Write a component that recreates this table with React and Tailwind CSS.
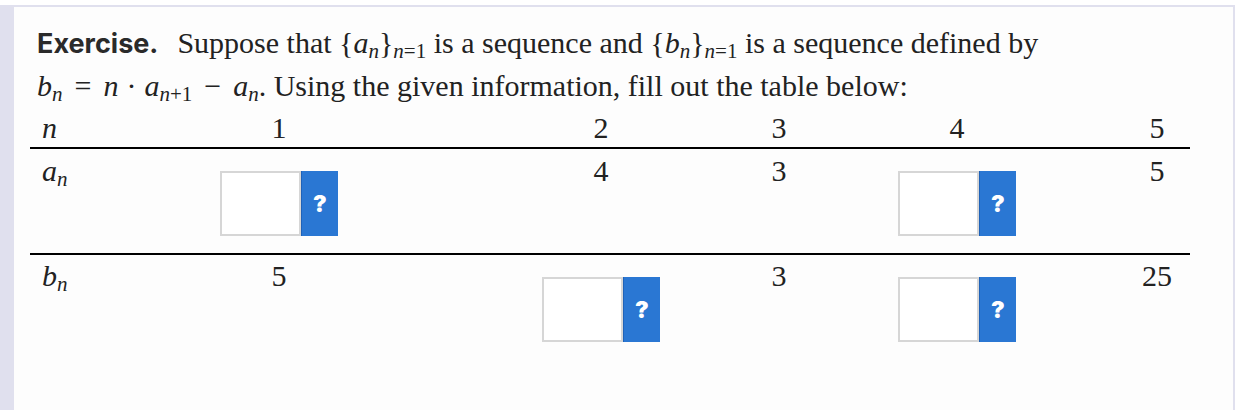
import React from "react";

const serif = "font-['Liberation_Serif',serif]";

function V({ children }) {
  return <span className="italic">{children}</span>;
}

function Sub({ children }) {
  return <sub className="text-[21px] leading-none">{children}</sub>;
}

function Op({ children, wide }) {
  return <span className={wide ? "mx-[12px]" : "mx-[8px]"}>{children}</span>;
}

function AnswerBox() {
  return (
    <div className="flex h-[65px] w-[118px]">
      <div className="h-full w-[81px] border-2 border-[#d6d6d6] bg-white" />
      <button className="flex h-full w-[37px] items-center justify-center border-l border-[#1f62b8] bg-[#2a77d3] pt-px font-['Inter',sans-serif] text-[23px] font-black leading-none text-white">
        ?
      </button>
    </div>
  );
}

function Cell({ children, first, pad = "" }) {
  return (
    <div className={first ? "flex justify-center" : "flex justify-end"}>
      <div className={`flex w-[118px] justify-center ${pad}`}>{children}</div>
    </div>
  );
}

function LastCell({ children }) {
  return (
    <div className="flex justify-end">
      <div className="flex w-[66px] justify-center">{children}</div>
    </div>
  );
}

const cols = "grid grid-cols-[170px_158px_302px_178px_178px_174px]";

export default function App() {
  return (
    <div className="min-h-screen bg-white">
      <div className={`mt-[5px] mr-[3px] h-[405px] border-t-2 border-r-2 border-l-[14px] border-[#e0e0ee] bg-[#fdfdfd] text-[#222] ${serif}`}>
        <p className="pl-[23px] pt-[15px] text-[30px] leading-[42px]">
          <span className="mr-[19px] font-['Inter',sans-serif] text-[27px] font-bold text-[#2a2a2a]">Exercise.</span>
          Suppose that {"{"}
          <V>a</V>
          <Sub><V>n</V></Sub>
          {"}"}
          <Sub><V>n</V>=1</Sub> is a sequence and {"{"}
          <V>b</V>
          <Sub><V>n</V></Sub>
          {"}"}
          <Sub><V>n</V>=1</Sub> is a sequence defined by
          <br />
          <V>b</V>
          <Sub><V>n</V></Sub>
          <Op wide>=</Op>
          <V>n</V>
          <Op>·</Op>
          <V>a</V>
          <Sub><V>n</V>+1</Sub>
          <Op wide>−</Op>
          <V>a</V>
          <Sub><V>n</V></Sub>. Using the given information, fill out the table below:
        </p>

        <div className="ml-[16px] mt-[5px] w-[1160px] text-[30px] leading-[32px]">
          <div className={`${cols} border-b-2 border-black pb-[3px]`}>
            <div className="pl-3"><V>n</V></div>
            <Cell first>1</Cell>
            <Cell>2</Cell>
            <Cell>3</Cell>
            <Cell>4</Cell>
            <LastCell>5</LastCell>
          </div>

          <div className={`${cols} h-[106px] border-b-2 border-black pt-[6px]`}>
            <div className="pl-3"><V>a</V><Sub><V>n</V></Sub></div>
            <Cell first pad="pt-[16px]"><AnswerBox /></Cell>
            <Cell>4</Cell>
            <Cell>3</Cell>
            <Cell pad="pt-[16px]"><AnswerBox /></Cell>
            <LastCell>5</LastCell>
          </div>

          <div className={`${cols} pt-[5px]`}>
            <div className="pl-3"><V>b</V><Sub><V>n</V></Sub></div>
            <Cell first>5</Cell>
            <Cell pad="pt-[17px]"><AnswerBox /></Cell>
            <Cell>3</Cell>
            <Cell pad="pt-[17px]"><AnswerBox /></Cell>
            <LastCell>25</LastCell>
          </div>
        </div>
      </div>
    </div>
  );
}
